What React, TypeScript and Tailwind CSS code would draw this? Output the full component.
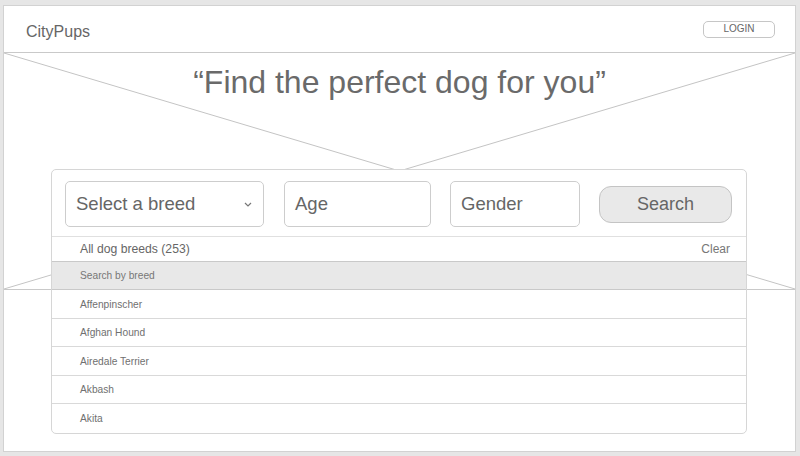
export default function App() {
  const breeds = ["Affenpinscher", "Afghan Hound", "Airedale Terrier", "Akbash", "Akita"];
  return (
    <div className="w-[800px] h-[456px] bg-[#e6e6e6] pt-[5px] pl-[3px] pr-[4px] pb-[4px] text-[#666] font-['Liberation_Sans',Arial,sans-serif]">
      <div className="h-full bg-white border border-[#d2d2d2] flex flex-col">
        <header className="h-[46px] shrink-0 flex items-center justify-between pl-[22px] pr-[20px]">
          <span className="mt-[6px] text-[16px] text-[#666]">CityPups</span>
          <button className="w-[72px] h-[17px] border border-[#c6c6c6] rounded-[5px] text-[10px] leading-none text-[#666] flex items-center justify-center">
            LOGIN
          </button>
        </header>

        <section className="relative h-[238px] shrink-0 border-y border-[#c9c9c9] pt-[11px]">
          <svg className="absolute inset-0 w-full h-full" preserveAspectRatio="none" viewBox="0 0 100 100">
            <line x1="0" y1="0" x2="100" y2="100" stroke="#c4c4c4" strokeWidth="1" vectorEffect="non-scaling-stroke" />
            <line x1="100" y1="0" x2="0" y2="100" stroke="#c4c4c4" strokeWidth="1" vectorEffect="non-scaling-stroke" />
          </svg>
          <h1 className="relative text-center text-[32px] leading-[1.15] text-[#6a6a6a]">“Find the perfect dog for you”</h1>
        </section>

        <div className="relative z-10 mt-[-121px] ml-[47px] w-[696px] bg-white border border-[#d6d6d6] rounded-[5px] overflow-hidden">
          <div className="h-[67px] flex items-center border-b border-[#e0e0e0] pl-[13px] pt-[2px]">
            <div className="w-[199px] h-[46px] border border-[#cdcdcd] rounded-[5px] flex items-center justify-between pl-[10px] pr-[11px]">
              <span className="text-[18.5px] text-[#666]">Select a breed</span>
              <svg width="8" height="5" viewBox="0 0 8 5" fill="none">
                <path d="M1 1 L4 4 L7 1" stroke="#777" strokeWidth="1.2" />
              </svg>
            </div>
            <div className="ml-[20px] w-[147px] h-[46px] border border-[#cdcdcd] rounded-[5px] flex items-center pl-[10px]">
              <span className="text-[18.5px] text-[#666]">Age</span>
            </div>
            <div className="ml-[19px] w-[130px] h-[46px] border border-[#cdcdcd] rounded-[5px] flex items-center pl-[10px]">
              <span className="text-[18.5px] text-[#666]">Gender</span>
            </div>
            <button className="ml-[19px] w-[133px] h-[37px] bg-[#e9e9e9] border border-[#c4c4c4] rounded-[12px] text-[18px] text-[#666] flex items-center justify-center">
              Search
            </button>
          </div>

          <div className="h-[24px] flex items-center justify-between pl-[28px] pr-[16px]">
            <span className="text-[12.2px] text-[#666]">All dog breeds (253)</span>
            <span className="text-[12px] text-[#777]">Clear</span>
          </div>

          <div className="h-[29px] bg-[#e8e8e8] border-y border-[#c9c9c9] flex items-center pl-[28px] pt-[1px] text-[10.2px] text-[#777]">
            Search by breed
          </div>

          {breeds.map((b, i) => (
            <div
              key={b}
              className={
                i < breeds.length - 1
                  ? "h-[28.5px] border-b border-[#d9d9d9] flex items-center pl-[28px] pt-[1px] text-[10.2px] text-[#707070]"
                  : "h-[28.5px] flex items-center pl-[28px] pt-[1px] text-[10.2px] text-[#707070]"
              }
            >
              {b}
            </div>
          ))}
        </div>
      </div>
    </div>
  );
}
